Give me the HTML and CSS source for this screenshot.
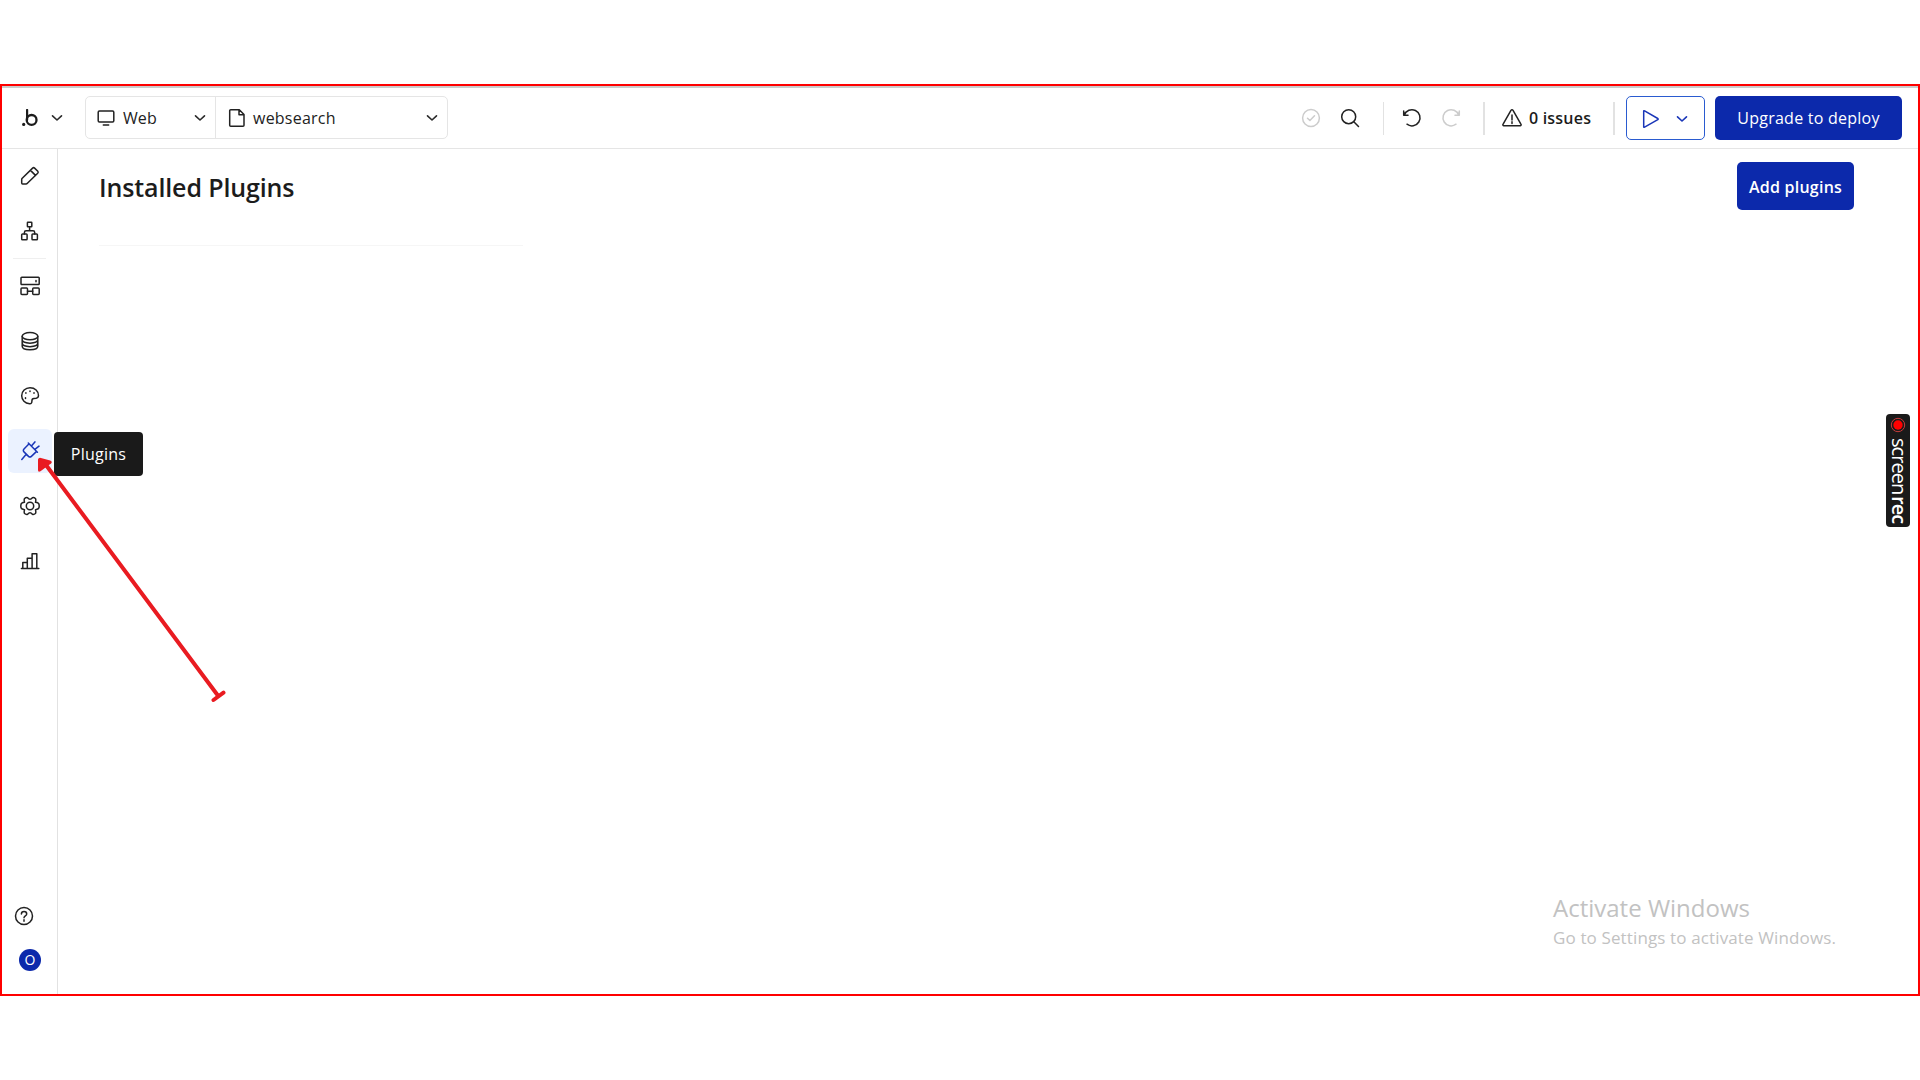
FILE: index.html
```html
<!DOCTYPE html>
<html lang="en">
<head>
<meta charset="utf-8">
<title>Installed Plugins</title>
<link rel="stylesheet" href="styles.css">
</head>
<body>
<div class="window">
  <header class="topbar">
    <button class="brand" aria-label="Menu">
      <svg width="16" height="18" viewBox="0 0 16 18"><circle cx="1.7" cy="15.4" r="1.6" fill="#1c1c1c"/><path d="M5.1 1v9.8" stroke="#1c1c1c" stroke-width="2.2" stroke-linecap="round"/><circle cx="9.6" cy="10.9" r="4.9" fill="none" stroke="#1c1c1c" stroke-width="2.3"/></svg>
      <svg class="chev" width="12" height="8" viewBox="0 0 12 8"><path d="M1.5 1.8 6 6l4.500-4.200"/></svg>
    </button>
    <div class="picker">
      <button class="pick pick-web">
        <svg class="ico" width="18" height="18" viewBox="0 0 18 18"><rect x="1.200" y="2" width="15.600" height="11" rx="1.200"/><path d="M6.300 16h5.400"/></svg>
        <span class="web-label">Web</span>
        <svg class="chev" width="12" height="8" viewBox="0 0 12 8"><path d="M1.500 1.800 6 6l4.500-4.200"/></svg>
      </button>
      <button class="pick pick-page">
        <svg class="ico" width="18" height="20" viewBox="0 0 18 20"><path d="M2.700 1.700h8.600l4.700 4.800v10.700a1 1 0 0 1-1 1H2.700a1 1 0 0 1-1-1V2.700a1 1 0 0 1 1-1zM11 2v4.800h4.800"/></svg>
        <span class="page-label">websearch</span>
        <svg class="chev" width="12" height="8" viewBox="0 0 12 8"><path d="M1.500 1.800 6 6l4.500-4.200"/></svg>
      </button>
    </div>
    <div class="tools">
      <div class="group group-search">
        <svg class="ico faint" width="20" height="20" viewBox="0 0 20 20"><circle cx="10" cy="10" r="8.400"/><path d="m6.500 10.200 2.400 2.300 4.600-4.700"/></svg>
        <svg class="ico" width="20" height="20" viewBox="0 0 20 20"><circle cx="8.700" cy="8.700" r="7"/><path d="m13.800 13.800 4.700 4.700"/></svg>
      </div>
      <i class="bar"></i>
      <div class="group group-history">
        <svg class="ico" width="20" height="20" viewBox="0 0 20 20"><path d="M1.700 3v4.300H6M2.300 7A8.100 8.100 0 1 1 5 16.200"/></svg>
        <svg class="ico faint" width="20" height="20" viewBox="0 0 20 20"><path d="M18.300 3v4.300H14M17.700 7A8.100 8.100 0 1 0 15 16.200"/></svg>
      </div>
      <i class="bar wide"></i>
      <div class="issues">
        <svg class="ico" width="20" height="20" viewBox="0 0 20 20"><path d="M9.100 2.200a1 1 0 0 1 1.800 0l8 14a.9.900 0 0 1-.8 1.500H1.900a.9.900 0 0 1-.8-1.500zM10 7v5M10 13.800v1.700"/></svg>
        <span class="issues-label">0 issues</span>
      </div>
      <i class="bar wide"></i>
      <button class="preview" aria-label="Preview">
        <svg class="ico blue" width="18" height="20" viewBox="0 0 18 20"><path d="M1.700 2.200v15.600q.1.700.9.300l13.200-7.400q.8-.6 0-1.200L2.600 1.900q-.8-.4-.9.300z"/></svg>
        <svg class="chev blue" width="12" height="8" viewBox="0 0 12 8"><path d="M1.500 1.800 6 6l4.500-4.200"/></svg>
      </button>
      <button class="deploy"><span class="deploy-label">Upgrade to deploy</span></button>
    </div>
  </header>
  <div class="body">
    <nav class="rail">
      <div class="rail-group first">
        <a class="item"><svg class="ico" width="20" height="20" viewBox="0 0 20 20"><path d="M2 12.500 12.600 2.100q1-.9 2 0l3.200 3.200q.8.900-.1 1.900L7.400 17.300Q6.800 18 6 18H2.600q-.9 0-.9-.9v-3.600q0-.600.3-1zM10.500 4.400l5 5"/></svg></a>
        <a class="item"><svg class="ico" width="20" height="20" viewBox="0 0 20 20"><rect x="7.400" y="1.300" width="4.400" height="4.400" rx=".5"/><rect x="1.700" y="13" width="5.400" height="5.700" rx=".8"/><rect x="12" y="13" width="5.400" height="5.700" rx=".8"/><path d="M9.600 5.700v4M4.400 13v-1.600q0-1.700 1.700-1.700H13q1.700 0 1.700 1.700V13"/></svg></a>
      </div>
      <div class="rail-group">
        <a class="item"><svg class="ico" width="20" height="20" viewBox="0 0 20 20"><rect x="1" y="1.300" width="18.200" height="7.300" rx=".8"/><rect x="1" y="12" width="6.500" height="6.500" rx=".9"/><rect x="12.700" y="12" width="6.500" height="6.500" rx=".9"/><path d="M7.500 15.300h5.200M16 4.400v1.400"/></svg></a>
        <a class="item"><svg class="ico" width="20" height="20" viewBox="0 0 20 20"><ellipse cx="10" cy="5.200" rx="7.800" ry="3.600"/><path d="M2.200 5.200v10c0 4.700 15.600 4.700 15.600 0v-10M2.200 8.600c0 4.700 15.600 4.700 15.600 0M2.200 12.100c0 4.700 15.600 4.700 15.600 0"/></svg></a>
        <a class="item"><svg class="ico" width="20" height="20" viewBox="0 0 20 20"><path d="M10 1.700c5 0 8.500 3.400 8.500 7.700 0 3-2.500 3.100-4.600 3.200-1.800.1-2 .9-2 2.400 0 1.900-.6 2.800-2.300 2.700C5 17.300 1.700 14 1.700 9.700S5.300 1.700 10 1.700z"/><path class="dots" d="M10 4.900v.6M5.900 6.700v.6M14 6.700v.6M5.500 11.800v.6"/></svg></a>
        <a class="item active"><svg class="ico blue" width="20" height="20" viewBox="0 0 20 20"><path d="M8.300 2 17.400 11.200M9.100 2.800 4 8q-1.300 1.500 0 2.900l4.500 4.500q1.500 1.300 2.900 0l5.200-5M6 13.600 1.800 18.400M11.400 5l3.500-4.100M14.900 8.400l4.100-3.300"/></svg></a>
        <a class="item"><svg class="ico" width="20" height="20" viewBox="0 0 20 20"><circle cx="10" cy="10" r="3.700"/><path d="M7.600 1.700Q10 4.700 12.400 1.700q1.600-.5 3 .8.800.9.100 3.800 3.300.4 3.500 2 .4 1.700 0 3.400-.2 1.600-3.500 2 .7 2.900-.1 3.800-1.400 1.300-3 .8Q10 15.300 7.600 18.300q-1.600.5-3-.8-.8-.9-.1-3.800-3.300-.4-3.500-2-.4-1.700 0-3.400.2-1.600 3.500-2-.7-2.900.1-3.800 1.400-1.300 3-.8z"/></svg></a>
        <a class="item"><svg class="ico" width="20" height="20" viewBox="0 0 20 20"><path d="M1.400 17.600h17.400M2.800 17.600v-6h4.500M7.300 17.600V7.200h4.800M12.100 17.600V2.700h4.700v14.900"/></svg></a>
      </div>
      <div class="rail-foot">
        <svg class="ico help" width="20" height="20" viewBox="0 0 20 20"><circle cx="10" cy="10" r="8.500"/><path d="M7.400 7.900c0-3.300 5.300-3.300 5.300 0 0 2-2.700 1.900-2.700 3.900M10 13.700v1.500"/></svg>
        <span class="avatar">O</span>
      </div>
    </nav>
    <main class="content">
      <section class="installed"><h1><span>Installed Plugins</span></h1></section>
      <button class="add"><span class="add-label">Add plugins</span></button>
    </main>
  </div>
  <div class="tooltip">Plugins</div>
  <svg class="arrow" width="200" height="260" viewBox="30 450 200 260"><path d="M46 465 217.500 695M213.500 700l10-7.300" fill="none" stroke="#e91b21" stroke-width="4" stroke-linecap="round"/><path d="M40 457.700 50.200 460.500Q52.800 461.700 51 463.500L40.500 471.200Q38 472.500 38 470v-10.500q.2-1.800 2-1.800z" fill="#e91b21"/></svg>
  <div class="recorder"><svg width="16" height="16" viewBox="0 0 16 16"><circle cx="8" cy="8" r="6.700" fill="none" stroke="#c83a3a"/><circle cx="8" cy="8" r="4.700" fill="#f00"/></svg><span>screen<b>rec</b></span></div>
  <div class="watermark"><p class="wm-title">Activate Windows</p><p class="wm-text">Go to Settings to activate Windows.</p></div>
</div>
</body>
</html>
```
FILE: styles.css
```css
* { box-sizing: border-box; }
body { margin: 0; background: #fff; color: #222; font-family: "Open Sans", "Noto Sans", sans-serif; font-size: 16px; }
button { border: 0; padding: 0; background: none; font: inherit; color: inherit; }
svg { display: block; flex: none; }
.window { position: relative; display: flex; flex-direction: column; width: 1920px; height: 912px; margin-top: 84px; border: 2px solid #f00; }
.topbar { display: flex; height: 63px; flex: none; border-top: 2px solid #ccc; border-bottom: 1px solid #e5e5e5; padding: 8px 16px 0 20px; }
.ico { fill: none; stroke: #222; stroke-width: 1.5; stroke-linecap: round; stroke-linejoin: round; }
.chev { fill: none; stroke: #2b2b2b; stroke-width: 1.6; stroke-linecap: round; stroke-linejoin: round; }
.ico.faint { stroke: #ccc; }
.ico.blue, .chev.blue { stroke: #1a36b8; }
.brand { display: flex; align-items: center; width: 63px; height: 44px; gap: 13px; }
.picker { display: flex; width: 363px; height: 43px; border: 1px solid #e5e5e5; border-radius: 5px; }
.pick { display: flex; align-items: center; }
.pick-web { width: 130px; padding: 0 9px 0 11px; border-right: 1px solid #e5e5e5; }
.pick-page { flex: 1; padding: 0 9px 0 12px; }
.pick .chev { margin-left: auto; }
.web-label { margin-left: 8px; letter-spacing: .1px; }
.page-label { margin-left: 7px; letter-spacing: .23px; }
.tools { display: flex; align-items: center; height: 44px; margin-left: auto; }
.group { display: flex; }
.group-search { gap: 19px; margin-right: 23px; }
.bar { width: 1px; height: 33px; background: #e2e2e2; }
.bar.wide { width: 2px; }
.group-history { gap: 19px; margin: 0 22px 0 18px; }
.issues { display: flex; align-items: center; width: 128px; padding-left: 17px; font-weight: 550; color: #1c1c1c; }
.issues-label { margin-left: 7px; letter-spacing: .2px; }
.preview { display: flex; align-items: center; justify-content: space-between; width: 79px; height: 44px; margin: 0 10.5px 0 10.5px; padding: 2px 16px 0 15px; border: 1px solid #2a5bd0; border-radius: 5px; }
.deploy { width: 187px; height: 44px; border-radius: 5px; background: #0c29ab; color: #fff; letter-spacing: .24px; }
.body { display: flex; flex: 1; }
.rail { display: flex; flex-direction: column; width: 56px; padding: 5px 4px 23px 6px; border-right: 1px solid #e2e2e2; }
.rail-group { display: flex; flex-direction: column; align-items: flex-start; gap: 11px; }
.rail-group.first { padding-bottom: 6px; margin-bottom: 5px; background: linear-gradient(#efefef, #efefef) 5px 100% / 33px 1px no-repeat; }
.item { display: flex; align-items: center; justify-content: center; width: 44px; height: 44px; border-radius: 6px; }
.item.active { background: #ebf2ff; }
.rail-foot { display: flex; flex-direction: column; gap: 23px; margin-top: auto; padding-left: 6px; }
.avatar { width: 22px; height: 22px; margin-left: 5px; border-radius: 50%; background: #0c29ab; color: #fff; font-size: 14px; line-height: 21px; text-align: center; }
.content { display: flex; flex: 1; justify-content: space-between; align-items: flex-start; padding: 13px 64px 0 41px; }
.installed { width: 424px; height: 84px; border-bottom: 1px solid #f6f6f6; }
h1 { margin: 7px 0 0; font-size: 25px; line-height: 36px; font-weight: 600; letter-spacing: -.13px; white-space: nowrap; color: #1c1c1c; }
.add { width: 117px; height: 48px; padding-top: 1px; border-radius: 5px; background: #0c29ab; color: #fff; font-weight: 600; letter-spacing: .24px; }
.tooltip { position: absolute; left: 52px; top: 346px; width: 89px; height: 44px; border-radius: 4px; background: #1a1a1a; color: #fff; line-height: 45px; text-align: center; letter-spacing: .25px; }
.arrow { position: absolute; left: 28px; top: 364px; }
.recorder { position: absolute; left: 1884px; top: 328px; width: 24px; height: 113px; padding-top: 3px; border-radius: 4px; background: #1a1a1a; color: #fff; display: flex; flex-direction: column; align-items: center; }
.recorder span { margin: 5px 0 0 1px; writing-mode: vertical-rl; font-size: 20px; line-height: 24px; letter-spacing: -.95px; }
.recorder b { margin-top: 2px; font-weight: 600; }
.watermark { position: absolute; left: 1551px; top: 804px; color: #c2c2c2; white-space: nowrap; }
.watermark p { margin: 0; }
.wm-title { font-size: 24px; line-height: 36px; }
.wm-text { font-size: 17px; line-height: 24px; letter-spacing: .13px; }
```
